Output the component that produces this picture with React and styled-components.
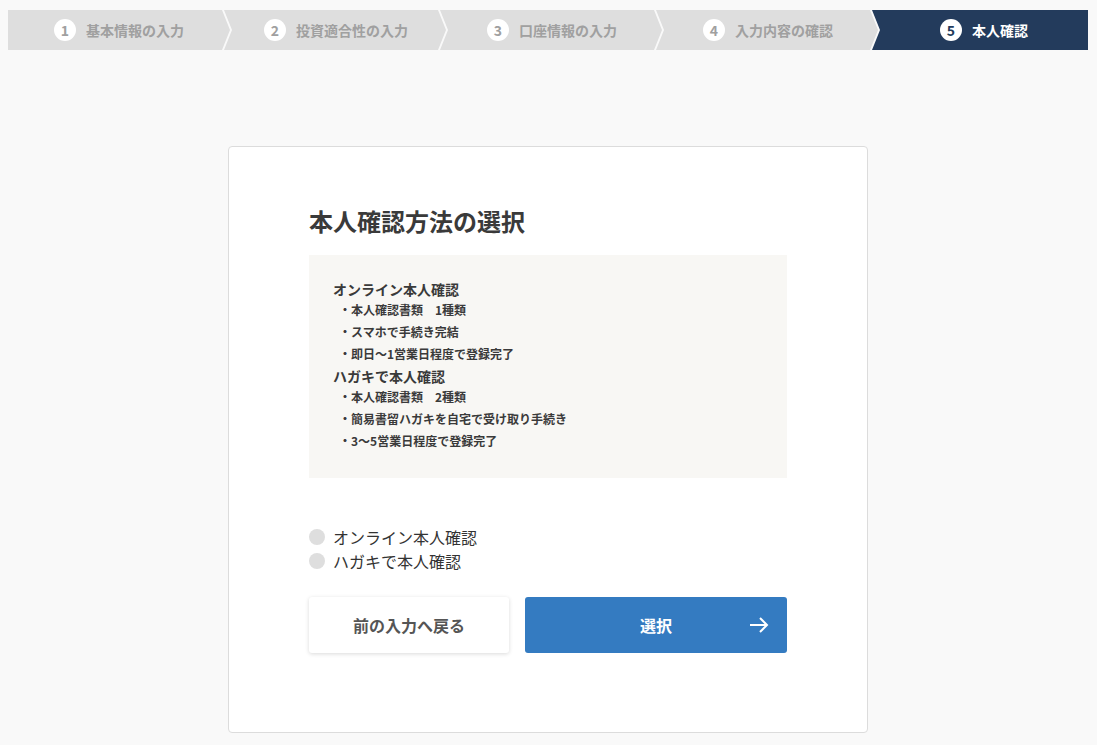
import React, { useState } from 'react';
import styled, { createGlobalStyle, css } from 'styled-components';

const GlobalStyle = createGlobalStyle`
  html, body {
    margin: 0;
    padding: 0;
    background-color: #f9f9f9;
    font-family: "Noto Sans CJK JP", "Noto Sans", sans-serif;
    color: #333;
  }
`;

const Page = styled.div`
  min-height: 745px;
  padding: 10px 9px 0 8px;
  box-sizing: border-box;
`;

const Stepper = styled.ol`
  display: flex;
  margin: 0;
  padding: 0;
  list-style: none;
  height: 40px;
`;

const Step = styled.li`
  flex: 0 0 calc(20% + 6px);
  display: flex;
  align-items: center;
  justify-content: center;
  gap: 10px;
  margin-left: -6px;
  padding-left: 2px;
  box-sizing: border-box;
  background-color: #dedede;
  color: #a0a0a0;
  font-size: 14px;
  font-weight: 700;
  clip-path: polygon(0 0, calc(100% - 8px) 0, 100% 50%, calc(100% - 8px) 100%, 0 100%, 8px 50%);

  ${(props) =>
    props.first &&
    css`
      margin-left: 0;
      padding-left: 0;
      clip-path: polygon(0 0, calc(100% - 8px) 0, 100% 50%, calc(100% - 8px) 100%, 0 100%);
    `}

  ${(props) =>
    props.last &&
    css`
      flex: 1;
      padding-left: 8px;
      clip-path: polygon(0 0, 100% 0, 100% 100%, 0 100%, 8px 50%);
    `}

  ${(props) =>
    props.active &&
    css`
      background-color: #233b5c;
      color: #fff;
    `}
`;

const StepNumber = styled.span`
  display: flex;
  align-items: center;
  justify-content: center;
  width: 22px;
  height: 22px;
  border-radius: 50%;
  background-color: #fff;
  color: #a0a0a0;
  font-size: 14px;
  font-weight: 700;

  ${(props) =>
    props.active &&
    css`
      color: #233b5c;
    `}
`;

const Card = styled.section`
  width: 640px;
  margin: 96px auto 0;
  padding: 56px 80px 79px;
  box-sizing: border-box;
  background-color: #fff;
  border: 1px solid #dcdcdc;
  border-radius: 4px;
`;

const Title = styled.h2`
  margin: 0 0 16px;
  font-size: 24px;
  line-height: 36px;
  font-weight: 700;
  color: #3a3a3a;
`;

const InfoBox = styled.div`
  background-color: #f8f7f4;
  padding: 24px 24px 25px;
  min-height: 222px;
  box-sizing: border-box;
`;

const InfoHeading = styled.p`
  margin: 0;
  font-size: 14px;
  line-height: 20px;
  font-weight: 700;
  color: #3a3a3a;
`;

const InfoList = styled.ul`
  margin: 0 0 1px;
  padding: 0 0 0 6px;
  list-style: none;
`;

const InfoItem = styled.li`
  font-size: 12px;
  line-height: 22px;
  font-weight: 700;
  color: #3a3a3a;

  &::before {
    content: '・';
  }
`;

const Options = styled.div`
  display: flex;
  flex-direction: column;
  margin-top: 47px;
`;

const Option = styled.label`
  display: flex;
  align-items: center;
  gap: 8px;
  height: 24px;
  font-size: 16px;
  color: #333;
  cursor: pointer;
`;

const RadioDot = styled.span`
  width: 16px;
  height: 16px;
  border-radius: 50%;
  background-color: #dedede;
  box-sizing: border-box;

  ${(props) =>
    props.checked &&
    css`
      border: 5px solid #347bc1;
      background-color: #fff;
    `}
`;

const Buttons = styled.div`
  display: flex;
  gap: 16px;
  margin-top: 24px;
`;

const Button = styled.button`
  position: relative;
  display: flex;
  align-items: center;
  justify-content: center;
  height: 56px;
  border: none;
  border-radius: 3px;
  font-family: inherit;
  font-size: 16px;
  font-weight: 700;
  cursor: pointer;

  ${(props) =>
    props.primary
      ? css`
          flex: 1;
          background-color: #347bc1;
          color: #fff;
        `
      : css`
          width: 200px;
          background-color: #fff;
          color: #555;
          box-shadow: 0 1px 4px rgba(0, 0, 0, 0.15);
        `}
`;

const ArrowIcon = styled.svg`
  position: absolute;
  right: 18px;
  top: 50%;
  transform: translateY(-50%);
`;

const steps = ['基本情報の入力', '投資適合性の入力', '口座情報の入力', '入力内容の確認', '本人確認'];

const methods = [
  {
    title: 'オンライン本人確認',
    items: ['本人確認書類　1種類', 'スマホで手続き完結', '即日〜1営業日程度で登録完了'],
  },
  {
    title: 'ハガキで本人確認',
    items: ['本人確認書類　2種類', '簡易書留ハガキを自宅で受け取り手続き', '3〜5営業日程度で登録完了'],
  },
];

function App() {
  const [selected, setSelected] = useState(null);

  return (
    <>
      <GlobalStyle />
      <Page>
        <Stepper>
          {steps.map((label, index) => (
            <Step
              key={label}
              first={index === 0}
              last={index === steps.length - 1}
              active={index === steps.length - 1}
            >
              <StepNumber active={index === steps.length - 1}>{index + 1}</StepNumber>
              {label}
            </Step>
          ))}
        </Stepper>

        <Card>
          <Title>本人確認方法の選択</Title>
          <InfoBox>
            {methods.map((method) => (
              <div key={method.title}>
                <InfoHeading>{method.title}</InfoHeading>
                <InfoList>
                  {method.items.map((item) => (
                    <InfoItem key={item}>{item}</InfoItem>
                  ))}
                </InfoList>
              </div>
            ))}
          </InfoBox>

          <Options>
            {methods.map((method, index) => (
              <Option key={method.title} onClick={() => setSelected(index)}>
                <RadioDot checked={selected === index} />
                {method.title}
              </Option>
            ))}
          </Options>

          <Buttons>
            <Button>前の入力へ戻る</Button>
            <Button primary>
              選択
              <ArrowIcon width="20" height="16" viewBox="0 0 20 16" fill="none">
                <path d="M1 8h17M11 1l7 7-7 7" stroke="#fff" strokeWidth="2" />
              </ArrowIcon>
            </Button>
          </Buttons>
        </Card>
      </Page>
    </>
  );
}

export default App;
